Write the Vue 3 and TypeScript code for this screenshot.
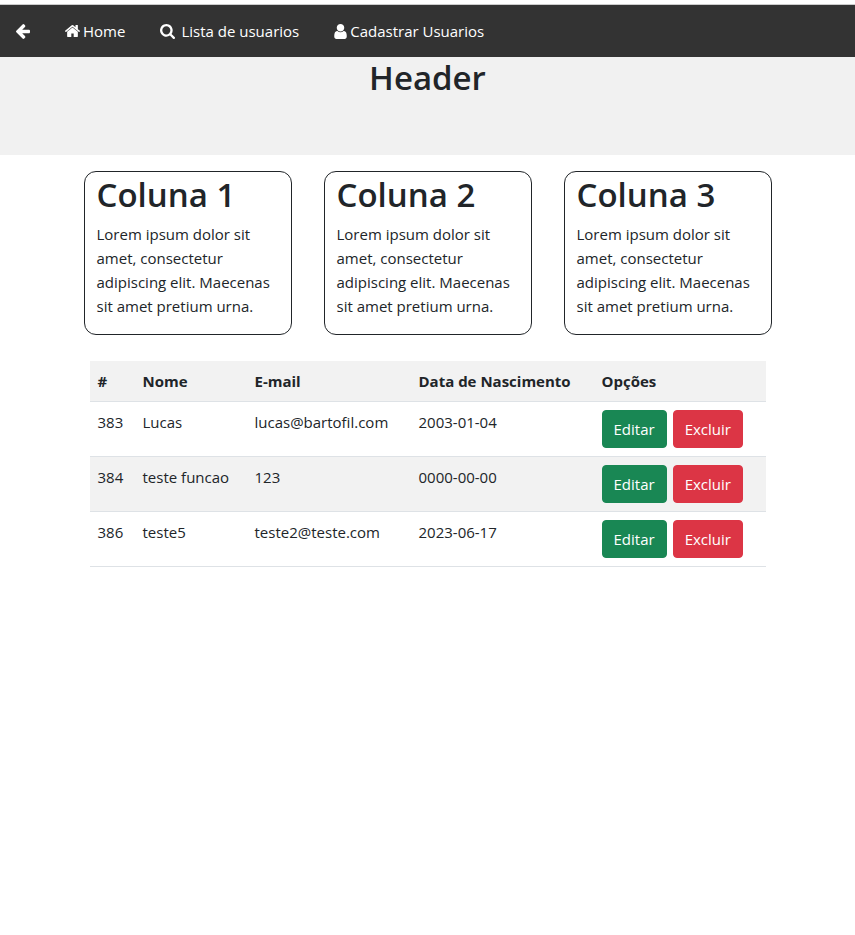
<script setup lang="ts">
interface NavItem {
  label: string
  text: string
  kind: string
  viewBox: string
  path: string
}

interface Column {
  title: string
  text: string
}

interface User {
  id: number
  name: string
  email: string
  birth: string
}

const navItems: NavItem[] = [
  {
    label: 'Voltar',
    text: '',
    kind: 'back',
    viewBox: '192 181 1472 1558',
    path: 'M1664 896v128q0 53-32.5 90.5t-84.5 37.5h-704l293 294q38 36 38 90t-38 90l-75 76q-37 37-90 37-52 0-91-37l-651-652q-37-37-37-90 0-52 37-91l651-650q38-38 91-38 52 0 90 38l75 74q38 38 38 91t-38 91l-293 293h704q52 0 84.5 37.5t32.5 90.5z',
  },
  {
    label: 'Home',
    text: 'Home',
    kind: 'home',
    viewBox: '89 253 1614 1283',
    path: 'M1472 992v480q0 26-19 45t-45 19h-384v-384h-256v384h-384q-26 0-45-19t-19-45v-480q0-1 .5-3t.5-3l575-474 575 474q1 2 1 6zm223-69l-62 74q-8 9-21 11h-3q-13 0-21-7l-692-577-692 577q-12 8-24 7-13-2-21-11l-62-74q-8-10-7-23.5t11-21.5l719-599q32-26 76-26t76 26l244 204v-195q0-14 9-23t23-9h192q14 0 23 9t9 23v408l219 182q10 8 11 21.5t-7 23.5z',
  },
  {
    label: 'Lista de usuarios',
    text: 'Lista de usuarios',
    kind: 'search',
    viewBox: '64 128 1664 1664',
    path: 'M1216 832q0-185-131.5-316.5t-316.5-131.5-316.5 131.5-131.5 316.5 131.5 316.5 316.5 131.5 316.5-131.5 131.5-316.5zm512 832q0 52-38 90t-90 38q-54 0-90-38l-343-342q-179 124-399 124-143 0-273.5-55.5t-225-150-150-225-55.5-273.5 55.5-273.5 150-225 225-150 273.5-55.5 273.5 55.5 225 150 150 225 55.5 273.5q0 220-124 399l343 343q37 37 37 90z',
  },
  {
    label: 'Cadastrar Usuarios',
    text: 'Cadastrar Usuarios',
    kind: 'user',
    viewBox: '256 128 1280 1536',
    path: 'M1536 1399q0 109-62.5 187t-150.5 78h-854q-88 0-150.5-78t-62.5-187q0-85 8.5-160.5t31.5-152 58.5-131 94-89 134.5-34.5q131 128 313 128t313-128q76 0 134.5 34.5t94 89 58.5 131 31.5 152 8.5 160.5zm-256-887q0 159-112.5 271.5t-271.5 112.5-271.5-112.5-112.5-271.5 112.5-271.5 271.5-112.5 271.5 112.5 112.5 271.5z',
  },
]

const lorem = 'Lorem ipsum dolor sit amet, consectetur adipiscing elit. Maecenas sit amet pretium urna.'

const columns: Column[] = [
  { title: 'Coluna 1', text: lorem },
  { title: 'Coluna 2', text: lorem },
  { title: 'Coluna 3', text: lorem },
]

const users: User[] = [
  { id: 383, name: 'Lucas', email: 'lucas@bartofil.com', birth: '2003-01-04' },
  { id: 384, name: 'teste funcao', email: '123', birth: '0000-00-00' },
  { id: 386, name: 'teste5', email: 'teste2@teste.com', birth: '2023-06-17' },
]
</script>

<template>
  <div class="page">
    <nav class="topnav">
      <a v-for="item in navItems" :key="item.kind" href="#" class="nav-link" :class="item.kind" :aria-label="item.label">
        <svg class="icon" :viewBox="item.viewBox" aria-hidden="true"><path :d="item.path" /></svg>
        <span v-if="item.text">{{ item.text }}</span>
      </a>
    </nav>

    <header class="banner">
      <h1>Header</h1>
    </header>

    <main class="container">
      <div class="cards">
        <section v-for="column in columns" :key="column.title" class="card">
          <h2>{{ column.title }}</h2>
          <p>{{ column.text }}</p>
        </section>
      </div>

      <div class="table-wrap">
        <table class="users">
          <colgroup>
            <col class="col-id" />
            <col class="col-name" />
            <col class="col-email" />
            <col class="col-birth" />
            <col />
          </colgroup>
          <thead>
            <tr>
              <th scope="col">#</th>
              <th scope="col">Nome</th>
              <th scope="col">E-mail</th>
              <th scope="col">Data de Nascimento</th>
              <th scope="col">Opções</th>
            </tr>
          </thead>
          <tbody>
            <tr v-for="user in users" :key="user.id">
              <td>{{ user.id }}</td>
              <td>{{ user.name }}</td>
              <td>{{ user.email }}</td>
              <td>{{ user.birth }}</td>
              <td>
                <div class="actions">
                  <button type="button" class="btn edit">Editar</button>
                  <button type="button" class="btn delete">Excluir</button>
                </div>
              </td>
            </tr>
          </tbody>
        </table>
      </div>
    </main>
  </div>
</template>

<style>
body {
  background: #fff;
}
</style>

<style scoped>
.page {
  padding-top: 4px;
  font-family: "Segoe UI", "Open Sans", "Noto Sans", sans-serif;
  font-size: 15px;
  line-height: 24px;
  color: #212529;
}

.topnav {
  display: flex;
  gap: 3px;
  border-top: 1px solid #ccc;
  background: #333;
}

.nav-link {
  display: flex;
  align-items: center;
  gap: 3px;
  padding: 14px 16px;
  color: #fff;
  text-decoration: none;
  white-space: nowrap;
}

.icon {
  flex: none;
  width: 15px;
  height: 15px;
  fill: currentColor;
}

.back .icon {
  width: 14px;
}

.home .icon {
  height: 12px;
}

.search {
  gap: 6px;
}

.user .icon {
  width: 13px;
}

.banner {
  min-height: 98px;
  background: #f1f1f1;
  text-align: center;
}

h1,
h2 {
  margin: 0;
  font-size: 33px;
  font-weight: 600;
  line-height: 42px;
}

.container {
  max-width: 720px;
  margin: 0 auto;
}

.cards {
  display: grid;
  grid-template-columns: repeat(3, 1fr);
  gap: 32px;
  padding: 16px;
}

.card {
  padding: 2px 12px 0;
  border: 1px solid #212529;
  border-radius: 12px;
}

.card p {
  margin: 6px 0 16px;
}

.table-wrap {
  padding: 10px 22px;
}

.users {
  width: 100%;
  table-layout: fixed;
  border-collapse: separate;
  border-spacing: 0;
}

.col-id {
  width: 45px;
}

.col-name {
  width: 112px;
}

.col-email {
  width: 164px;
}

.col-birth {
  width: 183px;
}

th,
td {
  padding: 8px;
  border-bottom: 1px solid #dee2e6;
  text-align: left;
  vertical-align: top;
  white-space: nowrap;
}

th {
  font-weight: 700;
}

thead tr,
tbody tr:nth-child(even) {
  background: #f2f2f2;
}

.actions {
  display: flex;
  gap: 6px;
}

.btn {
  padding: 6px 11px;
  border: 1px solid transparent;
  border-radius: 4px;
  font: inherit;
  color: #fff;
  cursor: pointer;
}

.edit {
  border-color: #198754;
  background: #198754;
}

.delete {
  border-color: #dc3545;
  background: #dc3545;
}
</style>
